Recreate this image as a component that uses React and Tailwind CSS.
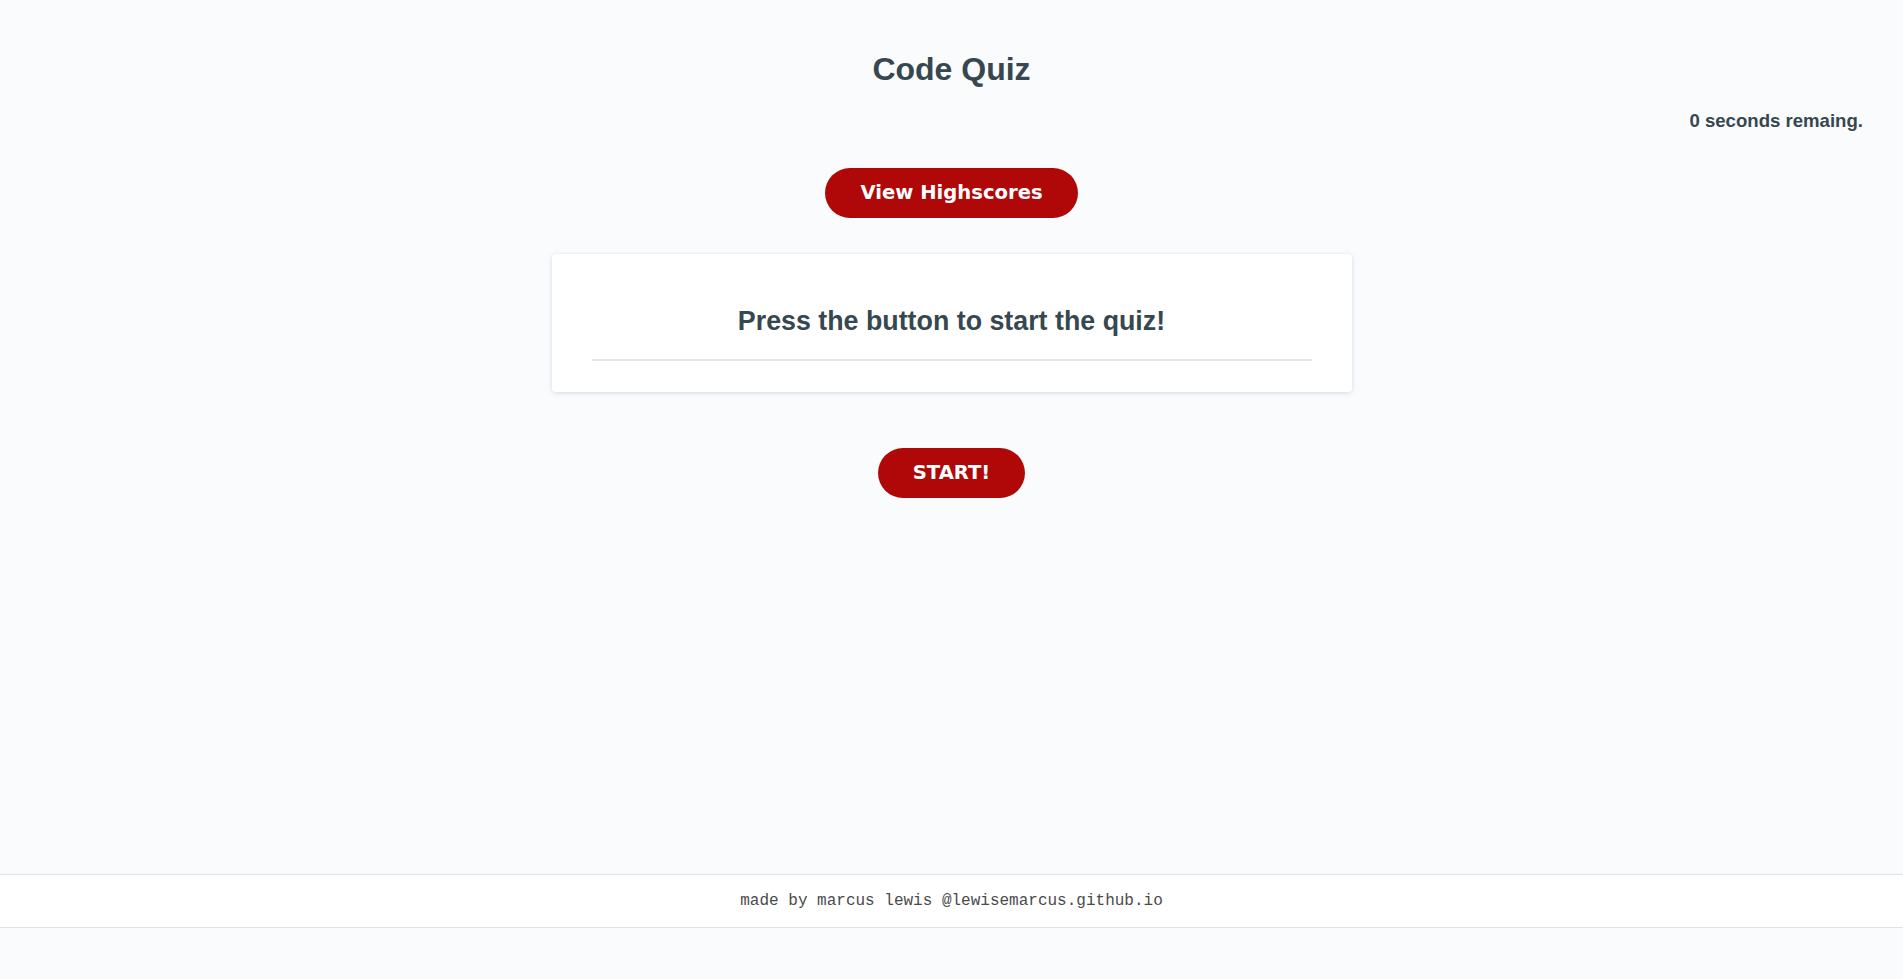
const headingFont = "font-['Liberation_Sans',Arial,sans-serif] font-bold";
const pillButton =
  "h-[50px] px-[35px] rounded-full bg-[#b00808] text-white text-[19.6px] font-bold font-['DejaVu_Sans',Verdana,sans-serif]";

export default function App() {
  return (
    <div className="min-h-screen flex flex-col bg-[#f9fbfd] text-[#37474f]">
      <main className="flex-1 flex flex-col items-center">
        <h1 className={`pt-[50px] text-[32px] leading-[38px] ${headingFont}`}>Code Quiz</h1>
        <div className="w-full flex justify-end pr-[40px] mt-[22px]">
          <p className={`text-[18.6px] leading-[22px] ${headingFont}`}>0 seconds remaing.</p>
        </div>
        <button className={`mt-[36px] ${pillButton}`}>View Highscores</button>
        <section className="mt-[36px] w-[800px] bg-white rounded-[4px] shadow-[0_1px_5px_rgba(0,0,0,0.14)] px-[40px] pt-[51px] pb-[31px]">
          <h2 className={`text-center text-[26.8px] leading-[32px] ${headingFont}`}>
            Press the button to start the quiz!
          </h2>
          <div className="mt-[22px] h-[2px] bg-[#e6e6e6]" />
        </section>
        <button className={`mt-[56px] ${pillButton}`}>START!</button>
      </main>
      <footer className="mb-[51px] h-[54px] flex items-center justify-center bg-white border-y border-[#e2e2e2] font-['Liberation_Mono','Courier_New',monospace] text-[16px] text-[#4a4a4a]">
        made by marcus lewis @lewisemarcus.github.io
      </footer>
    </div>
  );
}
